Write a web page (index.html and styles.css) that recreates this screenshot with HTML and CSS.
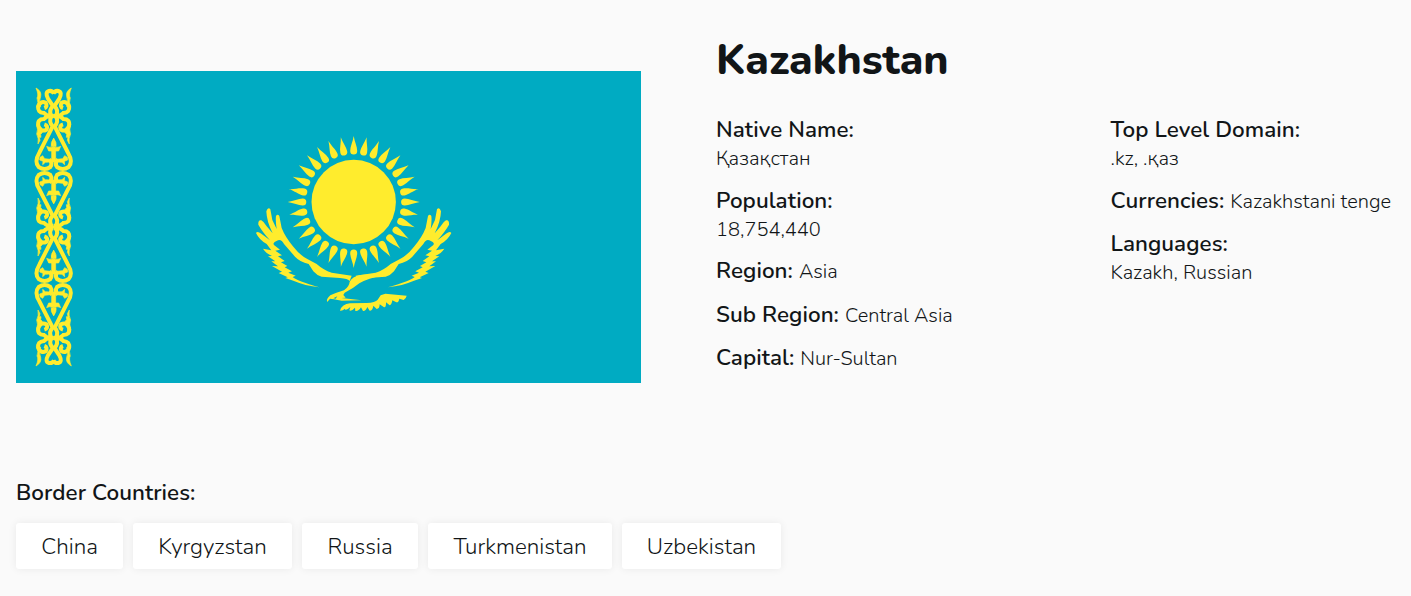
FILE: index.html
```html
<!DOCTYPE html>
<html lang="en">
<head>
<meta charset="utf-8">
<title>Kazakhstan</title>
<link rel="stylesheet" href="styles.css">
</head>
<body>
<main class="country">
  <section class="overview">
    <svg class="flag" viewBox="16 71 625 312" role="img" aria-label="Flag of Kazakhstan">
      <defs>
        <path id="ray" d="M353.7 136C354.6 142 357.2 146.500 357.200 151Q357.200 154.600 353.700 154.600Q350.200 154.600 350.200 151C350.200 146.500 352.800 142 353.700 136Z"/>
        <g id="rays8"><use href="#ray"/><use href="#ray" transform="rotate(11.25 353.7 202)"/><use href="#ray" transform="rotate(22.5 353.7 202)"/><use href="#ray" transform="rotate(33.75 353.7 202)"/><use href="#ray" transform="rotate(45 353.7 202)"/><use href="#ray" transform="rotate(56.25 353.7 202)"/><use href="#ray" transform="rotate(67.5 353.7 202)"/><use href="#ray" transform="rotate(78.75 353.7 202)"/></g>
        <path id="wing" d="M18 309Q22 302 34 311L60 331Q36 304 25 284Q24 268 34 271Q42 275 50 289L68 310Q50 275 49 244Q54 230 61 238L67 270L80 297Q76 272 78 258Q83 250 88 258L95 294Q106 322 130 350Q150 376 172 387L200 402Q220 420 245 428L305 437L299 453Q294 446 270 444L215 440Q200 436 190 424L176 402Q150 396 135 380L102 342Q94 327 84 331Q66 338 72 345L90 359L76 362L96 376L84 379L104 393L93 397L112 408L104 412L126 424L115 428L137 437L128 441Q140 452 208 472Q165 467 130 452L106 444L113 442L86 429L96 425L66 408L84 409L64 394L76 394L54 379L66 378Q48 370 39 356L64 361L50 342Q28 330 18 309Z"/>
        <g id="half">
          <path d="M101 109Q82 106 72 117Q51 117 55 138Q64 158 79 149Q86 137 73 133M93 112Q86 126 98 139L90 155L58 218Q42 245 56 261Q74 273 91 261Q99 249 88 238"/>
          <path class="solid" d="M50 134L62 147L67 158L62 163L63 172L58 172L60 181L54 192Q57 175 50 162Q55 150 50 134ZM60 232L68 227L74 236L92 238V246L76 247L68 254L69 244L59 240ZM101 175Q91 188 94 199H101ZM80 199Q86 204 101 200V213H86ZM95 205H102V246H95Z"/>
        </g>
        <g id="cap">
          <path d="M101 107Q82 110 72 99Q51 97 55 78Q63 61 77 68Q84 80 73 84M93 104Q86 91 99 78L84 56Q74 37 87 33Q97 31 102 41"/>
          <path class="solid" d="M48 24Q66 34 62 50Q55 65 62 80L49 82Q57 67 51 54Q57 45 48 24Z"/>
        </g>
        <g id="cell"><use href="#half"/><use href="#half" transform="translate(202 0) scale(-1 1)"/></g>
        <g id="end"><use href="#cap"/><use href="#cap" transform="translate(202 0) scale(-1 1)"/></g>
        <g id="ornament"><use href="#end"/><use href="#cell"/><use href="#cell" transform="translate(0 546) scale(1 -1)"/></g>
      </defs>
      <rect x="16" y="71" width="625" height="312" fill="#00abc2"/>
      <g fill="#ffec2d">
        <circle cx="353.7" cy="202" r="42.2"/>
        <use href="#rays8"/><use href="#rays8" transform="rotate(90 353.7 202)"/><use href="#rays8" transform="rotate(180 353.7 202)"/><use href="#rays8" transform="rotate(270 353.7 202)"/>
        <g transform="translate(250 130) scale(.33333)">
          <use href="#wing"/>
          <use href="#wing" transform="translate(622 0) scale(-1 1)"/>
        </g>
        <g transform="translate(320 265) scale(.33333)">
          <path d="M89 50Q98 34 122 30L190 25L188 32Q145 38 118 55Q98 72 74 83L70 90L77 98L64 99L125 106L65 107L42 103L30 101L22 111Q17 103 31 91Q52 82 72 76Q88 64 89 50ZM60 137Q66 117 90 115L140 114Q166 113 173 104L182 91L196 86L260 92Q258 101 251 105L238 101Q236 113 229 112L217 106Q215 120 209 121L198 112Q199 128 192 127L179 118Q179 132 170 132L160 122Q158 137 149 137L142 126Q137 139 129 138L123 127Q115 140 106 138L105 128Q94 140 88 136L91 126Q76 140 75 131Q66 139 60 137Z"/>
          <path d="M40 100L52 94L47 101Z" fill="#00abc2"/>
        </g>
      </g>
      <g class="ornament" transform="translate(20 80) scale(.33333)">
        <use href="#ornament"/>
        <use href="#ornament" transform="translate(0 882) scale(1 -1)"/>
      </g>
    </svg>
    <div class="details">
      <h1 class="name">Kazakhstan</h1>
      <div class="columns">
        <dl class="facts">
          <div class="fact stacked"><dt>Native Name:</dt><dd>Қазақстан</dd></div>
          <div class="fact stacked tight"><dt>Population:</dt><dd>18,754,440</dd></div>
          <div class="fact inline"><dt>Region:</dt><dd>Asia</dd></div>
          <div class="fact inline"><dt>Sub Region:</dt><dd>Central Asia</dd></div>
          <div class="fact inline"><dt>Capital:</dt><dd>Nur-Sultan</dd></div>
        </dl>
        <dl class="facts">
          <div class="fact stacked"><dt>Top Level Domain:</dt><dd>.kz, .қаз</dd></div>
          <div class="fact inline"><dt>Currencies:</dt><dd>Kazakhstani tenge</dd></div>
          <div class="fact stacked"><dt>Languages:</dt><dd>Kazakh, Russian</dd></div>
        </dl>
      </div>
    </div>
  </section>
  <section class="borders">
    <h2 class="borders-title">Border Countries:</h2>
    <div class="border-list">
      <a class="chip china">China</a><a class="chip kyrgyzstan">Kyrgyzstan</a><a class="chip russia">Russia</a><a class="chip turkmenistan">Turkmenistan</a><a class="chip uzbekistan">Uzbekistan</a>
    </div>
  </section>
</main>
</body>
</html>
```
FILE: styles.css
```css
* { box-sizing: border-box; }
body { margin: 0; height: 596px; overflow: hidden; background: #fafafa; color: #111517; font-family: Nunito, Lato, "Open Sans", sans-serif; }
h1, h2, dl, dd { margin: 0; }
.country { padding: 0 16px; }
.overview { display: flex; gap: 75px; height: 454px; }
.flag { display: block; flex: none; width: 625px; height: 312px; margin-top: 71px; }
.ornament { fill: none; stroke: #ffec2d; stroke-width: 12; }
.solid { fill: #ffec2d; stroke-width: 2; }
.details { flex: none; padding-top: 30px; }
.name { font-size: 42.500px; line-height: 60px; font-weight: 800; }
.columns { display: grid; grid-template-columns: 394.5px auto; padding-top: 25px; }
.facts { display: flex; flex-direction: column; gap: 14px; }
.fact { display: flex; align-items: baseline; gap: 6px; line-height: 29px; white-space: nowrap; }
.inline { height: 29.400px; }
.stacked { flex-direction: column; gap: 0; margin-bottom: -1px; }
.tight { margin-bottom: -1.800px; }
dt { font-size: 22.400px; font-weight: 600; letter-spacing: 0.060px; }
dd { font-size: 20px; font-weight: 300; }
.borders-title { padding-top: 24px; font-size: 22.400px; line-height: 30px; font-weight: 600; letter-spacing: 0.060px; }
.border-list { display: flex; gap: 10px; padding-top: 15px; }
.chip { height: 46px; border-radius: 3px; background: #fff; box-shadow: 0 0 8px rgba(0, 0, 0, .07); font-size: 22.400px; line-height: 47px; font-weight: 300; text-align: center; }
.china { width: 107px; }
.kyrgyzstan { width: 159px; }
.russia { width: 116px; }
.turkmenistan { width: 184px; }
.uzbekistan { width: 159px; }
```
